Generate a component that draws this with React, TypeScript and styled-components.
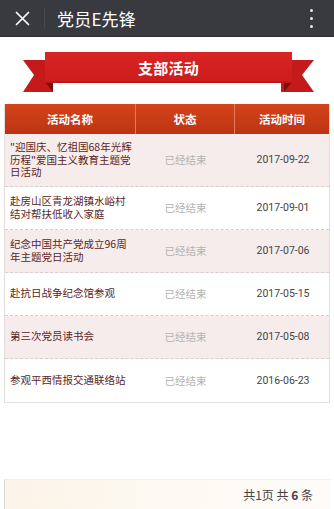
import React from "react";
import styled, { createGlobalStyle } from "styled-components";

const Global = createGlobalStyle`
  html, body { margin: 0; padding: 0; background: #fff; }
  body { font-family: "Noto Sans CJK SC", "Noto Sans", sans-serif; width: 334px; overflow: hidden; }
  * { box-sizing: border-box; }
`;

const Page = styled.div`
  width: 334px;
  height: 509px;
  display: flex;
  flex-direction: column;
  background: #fff;
`;

const NavBar = styled.div`
  height: 37px;
  background: #393a3f;
  border-bottom: 1px solid #2e2f33;
  display: flex;
  align-items: center;
  color: #fff;
`;

const CloseBtn = styled.div`
  width: 44px;
  height: 37px;
  display: flex;
  align-items: center;
  justify-content: center;
`;

const NavDivider = styled.div`
  width: 1px;
  height: 20px;
  background: #4a4b50;
`;

const NavTitle = styled.div`
  flex: 1;
  padding-left: 12px;
  font-size: 17px;
  line-height: 37px;
  letter-spacing: 0.2px;
`;

const MoreBtn = styled.div`
  width: 48px;
  display: flex;
  flex-direction: column;
  align-items: center;
  gap: 5px;
  margin-right: -1px;
`;

const Dot = styled.span`
  width: 3px;
  height: 3px;
  border-radius: 50%;
  background: #e8e8e8;
`;

const RibbonArea = styled.div`
  position: relative;
  height: 40px;
  margin-top: 15px;
  display: flex;
  justify-content: center;
`;

const RibbonArt = styled.svg`
  position: absolute;
  inset: 0;
  width: 334px;
  height: 40px;
`;

const RibbonTitle = styled.div`
  position: relative;
  margin-left: 3px;
  font-size: 15px;
  font-weight: 700;
  color: #fff;
  line-height: 31px;
  letter-spacing: 0.3px;
`;

const Table = styled.div`
  margin: 12px 4px 0;
  border: 1px solid #e6dede;
  border-top: none;
`;

const HeadRow = styled.div`
  display: grid;
  grid-template-columns: 131px 99px 1fr;
  height: 30px;
  background: linear-gradient(#d4441c, #bd3312);
`;

const HeadCell = styled.div<{ $last?: boolean }>`
  display: flex;
  align-items: center;
  justify-content: center;
  color: #fff;
  font-size: 11.5px;
  font-weight: 700;
  border-right: ${(p) => (p.$last ? "none" : "1px solid #e0785a")};
`;

const Row = styled.div<{ $odd: boolean; $last: boolean }>`
  display: grid;
  grid-template-columns: 131px 99px 1fr;
  min-height: 43px;
  background: ${(p) => (p.$odd ? "#f6ecec" : "#ffffff")};
  border-bottom: ${(p) => (p.$last ? "none" : "1px dashed #d9cdcd")};
`;

const NameCell = styled.div`
  display: flex;
  align-items: center;
  padding: 7px 3px 7px 5px;
  font-size: 10.5px;
  line-height: 12.5px;
  color: #5b1f24;
`;

const StatusCell = styled.div`
  display: flex;
  align-items: center;
  justify-content: center;
  font-size: 10.5px;
  color: #b3b3b3;
`;

const DateCell = styled.div`
  display: flex;
  align-items: center;
  justify-content: center;
  font-family: Roboto, "Noto Sans", sans-serif;
  font-size: 10.5px;
  color: #444;
  padding-left: 2px;
`;

const Footer = styled.div`
  margin: auto 4px 0;
  height: 30px;
  border-left: 1px solid #d8d8d8;
  border-top: 1px solid #f3efe8;
  background: linear-gradient(90deg, #fcf4e8, #fdf9f3 60%, #fefcf9);
  display: flex;
  align-items: center;
  justify-content: flex-end;
  padding-right: 17px;
  font-size: 12px;
  color: #444;
  white-space: pre;
`;

const Bold = styled.b`
  font-weight: 700;
`;

const rows = [
  { name: "\"迎国庆、忆祖国68年光辉历程\"爱国主义教育主题党日活动", date: "2017-09-22" },
  { name: "赴房山区青龙湖镇水峪村结对帮扶低收入家庭", date: "2017-09-01" },
  { name: "纪念中国共产党成立96周年主题党日活动", date: "2017-07-06" },
  { name: "赴抗日战争纪念馆参观", date: "2017-05-15" },
  { name: "第三次党员读书会", date: "2017-05-08" },
  { name: "参观平西情报交通联络站", date: "2016-06-23" },
];

export default function App() {
  return (
    <Page>
      <Global />
      <NavBar>
        <CloseBtn>
          <svg width="15" height="15" viewBox="0 0 15 15">
            <path d="M1.5 1.5 L13.5 13.5 M13.5 1.5 L1.5 13.5" stroke="#fff" strokeWidth="1.7" strokeLinecap="round" />
          </svg>
        </CloseBtn>
        <NavDivider />
        <NavTitle>党员E先锋</NavTitle>
        <MoreBtn>
          <Dot />
          <Dot />
          <Dot />
        </MoreBtn>
      </NavBar>

      <RibbonArea>
        <RibbonArt viewBox="0 0 334 40">
          <defs>
            <linearGradient id="band" x1="0" y1="0" x2="0" y2="1">
              <stop offset="0" stopColor="#d92424" />
              <stop offset="1" stopColor="#cc1c1c" />
            </linearGradient>
          </defs>
          <polygon points="23,8 53,8 53,40 23,40 34,23" fill="#c51a1a" />
          <polygon points="281,8 314,8 302,23 314,40 281,40" fill="#c51a1a" />
          <polygon points="45,30 53,30 53,40" fill="#7e0d0d" />
          <polygon points="292,30 284,30 284,40" fill="#7e0d0d" />
          <rect x="45" y="0" width="247" height="31" fill="url(#band)" />
          <rect x="45" y="29.5" width="247" height="1.5" fill="#a81414" opacity="0.6" />
        </RibbonArt>
        <RibbonTitle>支部活动</RibbonTitle>
      </RibbonArea>

      <Table>
        <HeadRow>
          <HeadCell>活动名称</HeadCell>
          <HeadCell>状态</HeadCell>
          <HeadCell $last>活动时间</HeadCell>
        </HeadRow>
        {rows.map((r, i) => (
          <Row key={i} $odd={i % 2 === 0} $last={i === rows.length - 1}>
            <NameCell>{r.name}</NameCell>
            <StatusCell>已经结束</StatusCell>
            <DateCell>{r.date}</DateCell>
          </Row>
        ))}
      </Table>

      <Footer>
        共1页 共 <Bold>6</Bold> 条
      </Footer>
    </Page>
  );
}
